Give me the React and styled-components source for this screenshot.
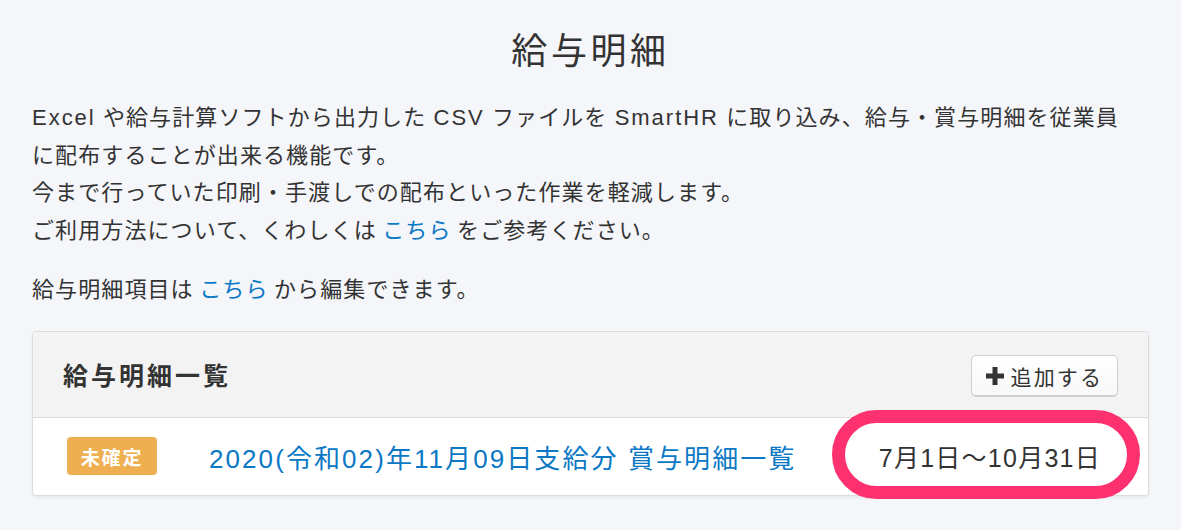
import React from 'react';
import styled, { createGlobalStyle } from 'styled-components';

const GlobalStyle = createGlobalStyle`
  html, body {
    margin: 0;
    padding: 0;
    background: #f5f6fa;
  }
  body {
    font-family: "Liberation Sans", "Noto Sans CJK JP", sans-serif;
    color: #333;
  }
`;

const Page = styled.div`
  padding: 25px 32px 35px;
  width: 1181px;
  box-sizing: border-box;
`;

const Title = styled.h1`
  margin: 0 0 20px;
  text-align: center;
  font-size: 36px;
  font-weight: normal;
  line-height: 54px;
  letter-spacing: 0.1em;
`;

const Lead = styled.p`
  margin: 0 0 ${(p) => p.$gap || 0}px;
  font-size: 22px;
  line-height: 37.5px;
  letter-spacing: 0.05em;
`;

const Latin = styled.span`
  letter-spacing: 0.09em;
`;

const TextLink = styled.a`
  color: #0a78c5;
  text-decoration: none;
  margin: 0 0.25em;
`;

const Card = styled.section`
  position: relative;
  background: #fff;
  border: 1px solid #dcdcdc;
  border-radius: 4px;
  box-shadow: 0 2px 3px rgba(0, 0, 0, 0.06);
`;

const CardHeader = styled.header`
  display: flex;
  align-items: center;
  justify-content: space-between;
  height: 85px;
  padding: 0 30px;
  background: #f3f3f3;
  border-bottom: 1px solid #dcdcdc;
  border-radius: 4px 4px 0 0;
`;

const CardTitle = styled.h2`
  margin: 0;
  font-size: 25px;
  font-weight: bold;
  letter-spacing: 0.12em;
`;

const AddButton = styled.button`
  display: flex;
  align-items: center;
  gap: 7px;
  height: 42px;
  margin-top: 4px;
  padding: 0 14px;
  background: linear-gradient(#fff, #f8f8f8);
  border: 1px solid #cfcfcf;
  border-bottom-width: 2px;
  border-radius: 5px;
  font-family: inherit;
  font-size: 21px;
  color: #333;
  letter-spacing: 0.1em;
  cursor: pointer;
`;

const Row = styled.div`
  display: flex;
  align-items: center;
  height: 77px;
  padding: 0 47px 0 34px;
`;

const Badge = styled.span`
  display: inline-flex;
  align-items: center;
  justify-content: center;
  width: 90px;
  height: 38px;
  border-radius: 4px;
  background: #efae4f;
  color: #fff;
  font-size: 19px;
  font-weight: bold;
  letter-spacing: 0.1em;
`;

const RowLink = styled.a`
  margin-left: 52px;
  color: #0a78c5;
  font-size: 26px;
  letter-spacing: 0.08em;
  text-decoration: none;
`;

const Period = styled.span`
  margin-left: auto;
  font-size: 25px;
  letter-spacing: 0.05em;
  color: #333;
`;

const Highlight = styled.div`
  position: absolute;
  left: 799px;
  top: 78px;
  width: 308px;
  height: 89px;
  box-sizing: border-box;
  border: 13px solid #fe3170;
  border-radius: 45px;
  pointer-events: none;
`;

function PlusIcon() {
  return (
    <svg width="18" height="18" viewBox="0 0 18 18">
      <path d="M6.5 0h5v6.5H18v5h-6.5V18h-5v-6.5H0v-5h6.5z" fill="#333" />
    </svg>
  );
}

function App() {
  return (
    <Page>
      <GlobalStyle />
      <Title>給与明細</Title>
      <Lead $gap={22}>
        <Latin>Excel</Latin> や給与計算ソフトから出力した <Latin>CSV</Latin> ファイルを <Latin>SmartHR</Latin> に取り込み、給与・賞与明細を従業員
        <br />
        に配布することが出来る機能です。
        <br />
        今まで行っていた印刷・手渡しでの配布といった作業を軽減します。
        <br />
        ご利用方法について、くわしくは
        <TextLink href="#">こちら</TextLink>
        をご参考ください。
      </Lead>
      <Lead $gap={22}>
        給与明細項目は
        <TextLink href="#">こちら</TextLink>
        から編集できます。
      </Lead>
      <Card>
        <CardHeader>
          <CardTitle>給与明細一覧</CardTitle>
          <AddButton type="button">
            <PlusIcon />
            追加する
          </AddButton>
        </CardHeader>
        <Row>
          <Badge>未確定</Badge>
          <RowLink href="#">2020(令和02)年11月09日支給分 賞与明細一覧</RowLink>
          <Period>7月1日〜10月31日</Period>
        </Row>
        <Highlight />
      </Card>
    </Page>
  );
}

export default App;
